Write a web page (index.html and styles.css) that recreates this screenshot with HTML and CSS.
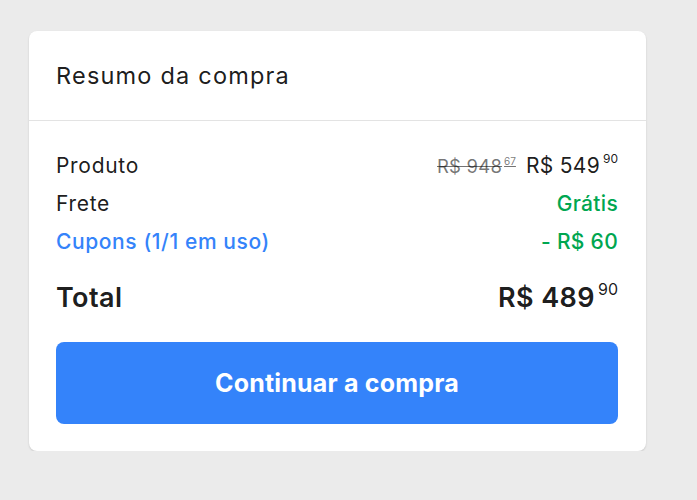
FILE: index.html
```html
<!DOCTYPE html>
<html lang="pt-BR">
<head>
<meta charset="utf-8">
<title>Resumo da compra</title>
<link rel="stylesheet" href="styles.css">
</head>
<body>
<section class="card">
  <header class="card-header">
    <h2 class="title">Resumo da compra</h2>
  </header>
  <div class="card-body">
    <div class="row">
      <span class="label">Produto</span>
      <span class="value">
        <s class="old">R$ 948<sup>67</sup></s>
        <span class="price">R$ 549<sup>90</sup></span>
      </span>
    </div>
    <div class="row">
      <span class="label">Frete</span>
      <span class="value green">Grátis</span>
    </div>
    <div class="row">
      <a class="label link" href="#">Cupons (1/1 em uso)</a>
      <span class="value green">- R$ 60</span>
    </div>
    <div class="row total">
      <span class="label">Total</span>
      <span class="value"><span class="price">R$ 489<sup>90</sup></span></span>
    </div>
    <button class="btn" type="button">Continuar a compra</button>
  </div>
</section>
</body>
</html>
```
FILE: styles.css
```css
* { box-sizing: border-box; }
html, body { margin: 0; }
body {
  background: #ebebeb;
  padding: 31px 0 0 29px;
  font-family: Inter, "Open Sans", Arial, sans-serif;
  color: rgba(0,0,0,.9);
}
.card {
  width: 617px;
  background: #fff;
  border-radius: 8px;
  box-shadow: 0 1px 2px rgba(0,0,0,.15);
}
.card-header {
  height: 90px;
  padding: 0 27px;
  display: flex;
  align-items: center;
  border-bottom: 1px solid #e3e3e3;
}
.title {
  margin: 0;
  font-size: 23.5px;
  font-weight: 400;
  letter-spacing: 1.2px;
}
.card-body {
  padding: 25px 28px 27px 27px;
}
.row {
  display: flex;
  justify-content: space-between;
  align-items: center;
  height: 38px;
  font-size: 21px;
  letter-spacing: 0.7px;
}
.label { color: rgba(0,0,0,.9); }
.link { color: #3483fa; text-decoration: none; font-weight: 500; letter-spacing: 0.6px; }
.value { display: flex; align-items: baseline; gap: 10px; }
.green { color: #00a650; font-weight: 500; letter-spacing: 0.3px; }
.old {
  color: rgba(0,0,0,.55);
  font-size: 18.5px;
  letter-spacing: 0.2px;
}
.price { letter-spacing: 0.3px; }
sup {
  font-size: 12px;
  vertical-align: 0;
  position: relative;
  top: -0.8em;
  margin-left: 3px;
  letter-spacing: 0;
}
.old sup { font-size: 10px; margin-left: 2px; }
.total {
  height: 40px;
  margin-top: 17px;
  font-size: 27px;
  font-weight: 600;
  letter-spacing: 0.4px;
}
.total .price { letter-spacing: 0.4px; }
.total sup { font-size: 16px; top: -0.7em; font-weight: 400; margin-left: 3px; }
.btn {
  display: block;
  width: 100%;
  height: 82px;
  margin-top: 25px;
  border: 0;
  border-radius: 8px;
  background: #3483fa;
  color: #fff;
  font-family: inherit;
  font-size: 25px;
  font-weight: 700;
  letter-spacing: 0.2px;
  cursor: pointer;
}
```
